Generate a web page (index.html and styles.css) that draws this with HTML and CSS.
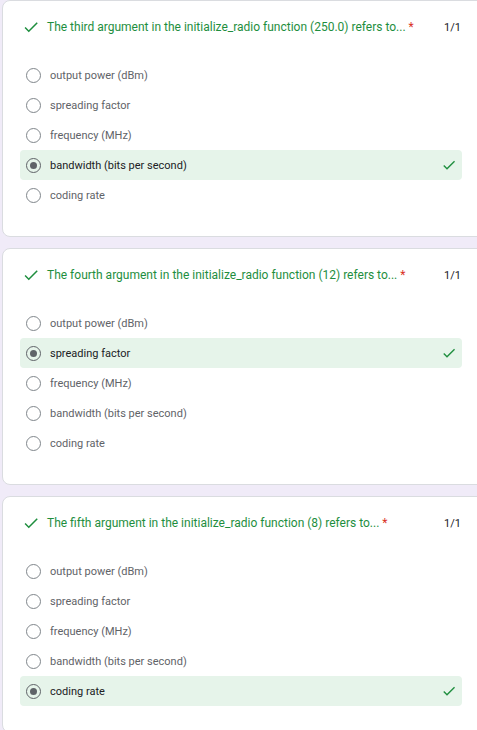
FILE: index.html
```html
<!DOCTYPE html>
<html>
<head>
<meta charset="utf-8">
<link rel="stylesheet" href="styles.css">
</head>
<body>
<div class="page">
  <section class="card">
    <div class="qhead">
      <svg class="qcheck" viewBox="0 0 24 24"><path d="M9 16.17L4.83 12l-1.42 1.41L9 19 21 7l-1.41-1.41z"/></svg>
      <span class="qtitle">The third argument in the initialize_radio function (250.0) refers to... <span class="req">*</span></span>
      <span class="score">1/1</span>
    </div>
    <ul class="opts">
      <li class="opt"><span class="radio"></span><span class="label">output power (dBm)</span></li>
      <li class="opt"><span class="radio"></span><span class="label">spreading factor</span></li>
      <li class="opt"><span class="radio"></span><span class="label">frequency (MHz)</span></li>
      <li class="opt correct"><span class="radio on"></span><span class="label">bandwidth (bits per second)</span><svg class="ocheck" viewBox="0 0 24 24"><path d="M9 16.17L4.83 12l-1.42 1.41L9 19 21 7l-1.41-1.41z"/></svg></li>
      <li class="opt"><span class="radio"></span><span class="label">coding rate</span></li>
    </ul>
  </section>
  <section class="card">
    <div class="qhead">
      <svg class="qcheck" viewBox="0 0 24 24"><path d="M9 16.17L4.83 12l-1.42 1.41L9 19 21 7l-1.41-1.41z"/></svg>
      <span class="qtitle">The fourth argument in the initialize_radio function (12) refers to... <span class="req">*</span></span>
      <span class="score">1/1</span>
    </div>
    <ul class="opts">
      <li class="opt"><span class="radio"></span><span class="label">output power (dBm)</span></li>
      <li class="opt correct"><span class="radio on"></span><span class="label">spreading factor</span><svg class="ocheck" viewBox="0 0 24 24"><path d="M9 16.17L4.83 12l-1.42 1.41L9 19 21 7l-1.41-1.41z"/></svg></li>
      <li class="opt"><span class="radio"></span><span class="label">frequency (MHz)</span></li>
      <li class="opt"><span class="radio"></span><span class="label">bandwidth (bits per second)</span></li>
      <li class="opt"><span class="radio"></span><span class="label">coding rate</span></li>
    </ul>
  </section>
  <section class="card">
    <div class="qhead">
      <svg class="qcheck" viewBox="0 0 24 24"><path d="M9 16.17L4.83 12l-1.42 1.41L9 19 21 7l-1.41-1.41z"/></svg>
      <span class="qtitle">The fifth argument in the initialize_radio function (8) refers to... <span class="req">*</span></span>
      <span class="score">1/1</span>
    </div>
    <ul class="opts">
      <li class="opt"><span class="radio"></span><span class="label">output power (dBm)</span></li>
      <li class="opt"><span class="radio"></span><span class="label">spreading factor</span></li>
      <li class="opt"><span class="radio"></span><span class="label">frequency (MHz)</span></li>
      <li class="opt"><span class="radio"></span><span class="label">bandwidth (bits per second)</span></li>
      <li class="opt correct"><span class="radio on"></span><span class="label">coding rate</span><svg class="ocheck" viewBox="0 0 24 24"><path d="M9 16.17L4.83 12l-1.42 1.41L9 19 21 7l-1.41-1.41z"/></svg></li>
    </ul>
  </section>
</div>
</body>
</html>
```
FILE: styles.css
```css
html, body {
  margin: 0;
  padding: 0;
  background: #f0ebf8;
  overflow: hidden;
  font-family: Roboto, "Liberation Sans", Arial, sans-serif;
}
.page {
  padding-left: 2px;
  display: flex;
  flex-direction: column;
  gap: 11px;
}
.card {
  box-sizing: border-box;
  width: 490px;
  height: 237px;
  background: #fff;
  border: 1px solid #dadce0;
  border-radius: 8px;
  padding: 14px 29px 0 17px;
}
.qhead {
  display: flex;
  align-items: center;
  height: 24px;
}
.qcheck {
  width: 18px;
  height: 18px;
  fill: #1e8e3e;
  margin-left: 2px;
  flex: none;
}
.qtitle {
  margin-left: 7px;
  flex: 1;
  color: #1e8e3e;
  font-size: 12px;
  white-space: nowrap;
}
.req {
  color: #d93025;
}
.score {
  color: #202124;
  font-size: 11px;
  margin-right: 1px;
}
.opts {
  list-style: none;
  margin: 21px 0 0 0;
  padding: 0;
}
.opt {
  display: flex;
  align-items: center;
  height: 30px;
  padding: 0 5px 0 6px;
  border-radius: 4px;
}
.opt.correct {
  background: #e6f4ea;
}
.radio {
  box-sizing: border-box;
  width: 15px;
  height: 15px;
  border: 1.5px solid #80868b;
  border-radius: 50%;
  flex: none;
  display: flex;
  align-items: center;
  justify-content: center;
}
.radio.on {
  border-color: #5f6368;
}
.radio.on::after {
  content: "";
  width: 7px;
  height: 7px;
  border-radius: 50%;
  background: #5f6368;
}
.label {
  margin-left: 9px;
  flex: 1;
  font-size: 11px;
  color: #5f6368;
}
.opt.correct .label {
  color: #202124;
}
.ocheck {
  width: 16px;
  height: 16px;
  fill: #1e8e3e;
  flex: none;
}
```
